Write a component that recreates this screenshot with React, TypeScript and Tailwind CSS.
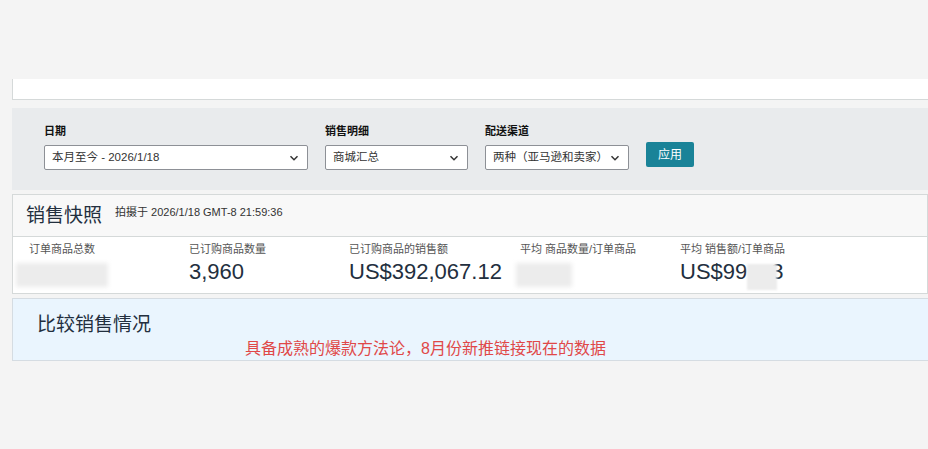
import React from "react";

const font = "font-['Liberation_Sans','Noto_Sans_CJK_SC',sans-serif]";

const Chevron = () => (
  <svg width="10" height="10" viewBox="0 0 10 10" className="shrink-0">
    <path d="M1.5 3.2 L5 6.7 L8.5 3.2" fill="none" stroke="#333" strokeWidth="1.5" />
  </svg>
);

const SelectBox = ({ value, width }: { value: string; width: string }) => (
  <div
    className={`${width} h-[25px] bg-white border border-[#8d9096] rounded-[2px] flex items-center justify-between pl-[7px] pr-[8px] text-[11.5px] text-[#333]`}
  >
    <span>{value}</span>
    <Chevron />
  </div>
);

const filters = [
  { label: "日期", value: "本月至今 - 2026/1/18", width: "w-[264px]" },
  { label: "销售明细", value: "商城汇总", width: "w-[143px]" },
  { label: "配送渠道", value: "两种（亚马逊和卖家）", width: "w-[144px]" },
];

const metrics = [
  { label: "订单商品总数", value: "", width: "w-[160px]", blur: "w-[92px] -ml-[13px]" },
  { label: "已订购商品数量", value: "3,960", width: "w-[160px]" },
  { label: "已订购商品的销售额", value: "US$392,067.12", width: "w-[171px]" },
  { label: "平均 商品数量/订单商品", value: "", width: "w-[160px]", blur: "w-[56px] -ml-[4px]" },
  { label: "平均 销售额/订单商品", value: "US$99", width: "w-[160px]", tail: "3" },
];

export default function App() {
  return (
    <div className={`w-[928px] h-[449px] overflow-hidden bg-[#f4f4f4] pt-[79px] ${font}`}>
      <div className="ml-[12px]">
        {/* top white strip */}
        <div className="h-[21px] bg-white border-l border-b border-[#d5d9d9]" />

        {/* filter panel */}
        <div className="mt-[8px] h-[82px] bg-[#e9ebed] pl-[32px] pt-[17px] flex items-end gap-[17px] pb-[20px]">
          {filters.map((f) => (
            <div key={f.label} className="flex flex-col">
              <span className="text-[11px] font-bold text-[#111] leading-[14px] mb-[7px]">{f.label}</span>
              <SelectBox value={f.value} width={f.width} />
            </div>
          ))}
          <button className="mb-[3px] h-[25px] w-[48px] rounded-[2px] bg-[#1a8398] text-white text-[12px]">
            应用
          </button>
        </div>

        {/* snapshot card */}
        <div className="mt-[4px] border border-[#d5d9d9] bg-white">
          <div className="h-[42px] bg-[#f8f8f8] border-b border-[#d5d9d9] flex items-center pl-[13px]">
            <span className="text-[19px] text-[#232f3e] leading-none">销售快照</span>
            <span className="ml-[13px] text-[11px] text-[#333] -mt-[6px]">拍摄于 2026/1/18 GMT-8 21:59:36</span>
          </div>
          <div className="h-[56px] flex pl-[16px] pt-[5px]">
            {metrics.map((m) => (
              <div key={m.label} className={`${m.width} flex flex-col`}>
                <span className="text-[11px] text-[#555] leading-[14px]">{m.label}</span>
                <div className="flex items-center h-[30px] mt-[1px]">
                  {m.value && (
                    <span className="text-[22px] text-[#232f3e] leading-none">{m.value}</span>
                  )}
                  {m.blur && (
                    <div className={`${m.blur} h-[24px] mt-[6px] bg-[#ececec] blur-[2px]`} />
                  )}
                  {m.tail && (
                    <>
                      <div className="w-[30px] h-[26px] mt-[10px] bg-[#ececec] blur-[1px]" />
                      <span className="text-[22px] text-[#232f3e] leading-none -ml-[6px]">{m.tail}</span>
                    </>
                  )}
                </div>
              </div>
            ))}
          </div>
        </div>

        {/* compare sales */}
        <div className="mt-[4px] h-[63px] bg-[#eaf5fe] border-l border-t border-b border-[#d5dce2] pl-[24px] pt-[13px] flex flex-col">
          <span className="text-[19px] text-[#232f3e] leading-[26px]">比较销售情况</span>
          <span className="ml-[208px] text-[16px] text-[#e04848] leading-[20px] mt-[1px]">
            具备成熟的爆款方法论，8月份新推链接现在的数据
          </span>
        </div>
      </div>
    </div>
  );
}
